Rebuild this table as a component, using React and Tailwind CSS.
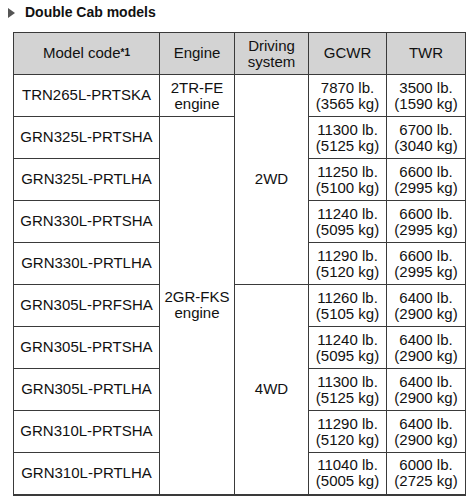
import React from "react";

const rows = [
  { code: "TRN265L-PRTSKA", gcwr: ["7870 lb.", "(3565 kg)"], twr: ["3500 lb.", "(1590 kg)"] },
  { code: "GRN325L-PRTSHA", gcwr: ["11300 lb.", "(5125 kg)"], twr: ["6700 lb.", "(3040 kg)"] },
  { code: "GRN325L-PRTLHA", gcwr: ["11250 lb.", "(5100 kg)"], twr: ["6600 lb.", "(2995 kg)"] },
  { code: "GRN330L-PRTSHA", gcwr: ["11240 lb.", "(5095 kg)"], twr: ["6600 lb.", "(2995 kg)"] },
  { code: "GRN330L-PRTLHA", gcwr: ["11290 lb.", "(5120 kg)"], twr: ["6600 lb.", "(2995 kg)"] },
  { code: "GRN305L-PRFSHA", gcwr: ["11260 lb.", "(5105 kg)"], twr: ["6400 lb.", "(2900 kg)"] },
  { code: "GRN305L-PRTSHA", gcwr: ["11240 lb.", "(5095 kg)"], twr: ["6400 lb.", "(2900 kg)"] },
  { code: "GRN305L-PRTLHA", gcwr: ["11300 lb.", "(5125 kg)"], twr: ["6400 lb.", "(2900 kg)"] },
  { code: "GRN310L-PRTSHA", gcwr: ["11290 lb.", "(5120 kg)"], twr: ["6400 lb.", "(2900 kg)"] },
  { code: "GRN310L-PRTLHA", gcwr: ["11040 lb.", "(5005 kg)"], twr: ["6000 lb.", "(2725 kg)"] },
];

const cell = "border border-[#3a3a3a] text-center align-middle p-0";

const TwoLine = ({ lines }) => (
  <div className="leading-[16px]">
    <div>{lines[0]}</div>
    <div>{lines[1]}</div>
  </div>
);

export default function App() {
  return (
    <div className="w-[474px] h-[499px] bg-white text-[#111] font-['Liberation_Sans',Arial,sans-serif] overflow-hidden">
      <div className="flex items-center h-[25px] pl-[8px] gap-[10px]">
        <svg width="7" height="10" viewBox="0 0 7 10">
          <polygon points="0,0 7,5 0,10" fill="#555" />
        </svg>
        <span className="text-[14px] font-bold">Double Cab models</span>
      </div>
      <table className="ml-[13px] mt-[7px] border-collapse table-fixed w-[452px] text-[15px] border-b-2 border-[#3a3a3a]">
        <colgroup>
          <col className="w-[146px]" />
          <col className="w-[75px]" />
          <col className="w-[74px]" />
          <col className="w-[78px]" />
          <col className="w-[79px]" />
        </colgroup>
        <thead>
          <tr className="h-[42px] bg-[#d3d3d3]">
            <th className={`${cell} font-normal`}>
              Model code<sup className="text-[10px] font-bold relative -top-[2px]">*1</sup>
            </th>
            <th className={`${cell} font-normal`}>Engine</th>
            <th className={`${cell} font-normal leading-[16px]`}>
              Driving
              <br />
              system
            </th>
            <th className={`${cell} font-normal`}>GCWR</th>
            <th className={`${cell} font-normal`}>TWR</th>
          </tr>
        </thead>
        <tbody>
          {rows.map((r, i) => (
            <tr key={r.code} className="h-[42px]">
              <td className={cell}>{r.code}</td>
              {i === 0 && (
                <td className={cell}>
                  <TwoLine lines={["2TR-FE", "engine"]} />
                </td>
              )}
              {i === 1 && (
                <td className={cell} rowSpan={9}>
                  <TwoLine lines={["2GR-FKS", "engine"]} />
                </td>
              )}
              {i === 0 && (
                <td className={cell} rowSpan={5}>
                  2WD
                </td>
              )}
              {i === 5 && (
                <td className={cell} rowSpan={5}>
                  4WD
                </td>
              )}
              <td className={cell}>
                <TwoLine lines={r.gcwr} />
              </td>
              <td className={cell}>
                <TwoLine lines={r.twr} />
              </td>
            </tr>
          ))}
        </tbody>
      </table>
    </div>
  );
}
